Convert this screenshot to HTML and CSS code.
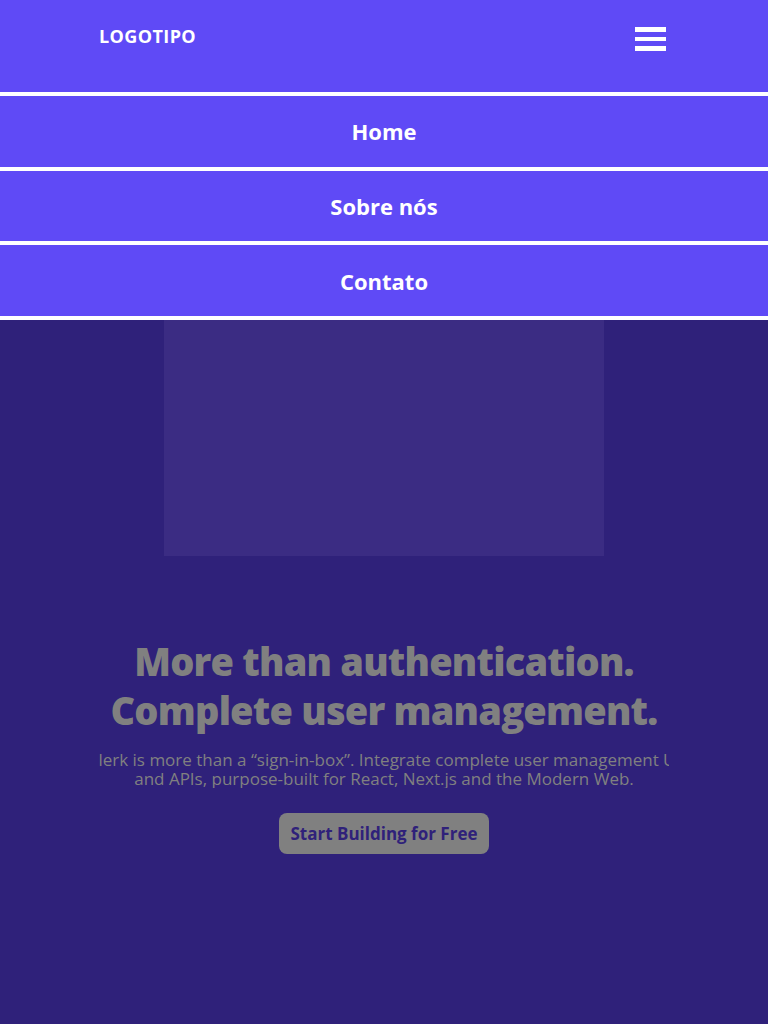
FILE: index.html
```html
<!DOCTYPE html>
<html lang="pt">
<head>
<meta charset="utf-8">
<title>Logotipo</title>
<link rel="stylesheet" href="styles.css">
</head>
<body>
<header class="header">
  <div class="container header-bar">
    <a class="logo" href="#">LOGOTIPO</a>
    <button class="burger" aria-label="Menu">
      <span></span><span></span><span></span>
    </button>
  </div>
  <nav class="menu">
    <a class="menu-item" href="#">Home</a>
    <a class="menu-item" href="#">Sobre nós</a>
    <a class="menu-item" href="#">Contato</a>
  </nav>
</header>
<main class="hero">
  <div class="hero-box"></div>
  <div class="container hero-text">
    <h1 class="title">More than authentication. Complete user management.</h1>
    <div class="lead-wrap">
      <p class="lead">Clerk is more than a “sign-in-box”. Integrate complete user management UI and APIs, purpose-built for React, Next.js and the Modern Web.</p>
    </div>
    <a class="cta" href="#">Start Building for Free</a>
  </div>
</main>
</body>
</html>
```

FILE: styles.css
```css
* { box-sizing: border-box; }
html, body { margin: 0; padding: 0; }
body {
  font-family: "Open Sans", "Noto Sans", sans-serif;
  background: #2f217a;
  min-height: 1024px;
}
.container {
  width: 570px;
  margin: 0 auto;
}
.header {
  position: relative;
  background: #5f4af6;
  height: 92px;
}
.header-bar {
  height: 92px;
  display: flex;
  justify-content: space-between;
  align-items: flex-start;
}
.logo {
  color: #fff;
  text-decoration: none;
  font-weight: 700;
  font-size: 18px;
  line-height: 24px;
  margin-top: 24px;
  letter-spacing: 0.4px;
}
.burger {
  background: none;
  border: 0;
  padding: 0;
  margin-top: 27px;
  margin-right: 3px;
  width: 31px;
  display: flex;
  flex-direction: column;
  gap: 5px;
}
.burger span {
  display: block;
  height: 4.5px;
  background: #fff;
}
.menu {
  position: absolute;
  top: 92px;
  left: 0;
  right: 0;
  border-top: 4px solid #fff;
  display: flex;
  flex-direction: column;
  z-index: 2;
}
.menu-item {
  height: 74.67px;
  border-bottom: 4px solid #fff;
  background: #5f4af6;
  color: #fff;
  text-decoration: none;
  font-weight: 700;
  font-size: 22px;
  display: flex;
  align-items: center;
  justify-content: center;
}
.hero {
  display: flex;
  flex-direction: column;
  align-items: center;
  padding-top: 24px;
}
.hero-box {
  width: 440px;
  height: 440px;
  background: #3b2c83;
}
.hero-text {
  display: flex;
  flex-direction: column;
  align-items: center;
  text-align: center;
}
.title {
  margin: 81px 0 0;
  color: #808080;
  font-size: 38px;
  line-height: 49px;
  font-weight: 800;
  letter-spacing: -0.8px;
}
.lead-wrap {
  width: 570px;
  overflow: hidden;
  display: flex;
  justify-content: center;
  margin-top: 15px;
}
.lead {
  flex: none;
  width: 600px;
  margin: 0;
  color: #808080;
  font-size: 17px;
  line-height: 19px;
}
.cta {
  margin-top: 25px;
  height: 41px;
  padding: 0 11px;
  display: flex;
  align-items: center;
  background: #808080;
  color: #2f217a;
  border-radius: 8px;
  font-weight: 700;
  font-size: 17px;
  text-decoration: none;
}
```
